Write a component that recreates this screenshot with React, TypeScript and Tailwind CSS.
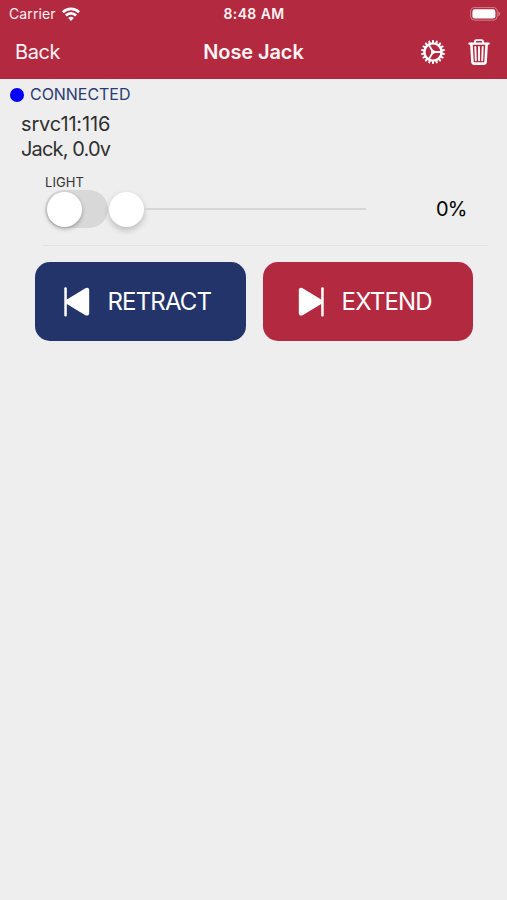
import React from "react";

function WifiIcon() {
  return (
    <svg width="18" height="14" viewBox="0 0 18 14" fill="none" stroke="#fff" strokeWidth="2.7">
      <path d="M0.9 5.2a11.5 11.5 0 0 1 16.2 0" />
      <path d="M3.9 8.5a7.2 7.2 0 0 1 10.2 0" />
      <path d="M9 14L6.2 11a4.1 4.1 0 0 1 5.6 0z" fill="#fff" stroke="none" />
    </svg>
  );
}

function BatteryIcon() {
  return (
    <svg width="31" height="14" viewBox="0 0 31 14">
      <rect x="0.6" y="0.6" width="26.6" height="12.6" rx="4" fill="none" stroke="#fff" strokeOpacity="0.4" strokeWidth="1" />
      <rect x="2.4" y="2.3" width="23" height="9.3" rx="2.4" fill="#fff" />
      <path d="M28.4 4.6c2 .8 2 3.8 0 4.6z" fill="#fff" fillOpacity="0.45" />
    </svg>
  );
}

const TEETH = Array.from({ length: 18 }, (_, i) => i * 20);

function GearIcon() {
  return (
    <svg width="24" height="24" viewBox="-12 -12 24 24" stroke="#fff" fill="none">
      <circle r="8.6" strokeWidth="2.4" />
      {TEETH.map((a) => (
        <path key={a} d="M0 -9V-11.1" strokeWidth="2" strokeLinecap="round" transform={`rotate(${a})`} />
      ))}
      <path d="M0 0H8.5M0 0L-4.25 -7.4M0 0L-4.25 7.4" strokeWidth="1.9" />
      <circle r="1.9" fill="#fff" stroke="none" />
    </svg>
  );
}

function TrashIcon() {
  return (
    <svg width="22" height="26" viewBox="0 0 22 26" fill="none" stroke="#fff" strokeLinecap="round" strokeLinejoin="round">
      <path d="M1.3 4.6H20.7" strokeWidth="2.1" />
      <path d="M7 4V2.6Q7 1.1 8.5 1.1H13.5Q15 1.1 15 2.6V4" strokeWidth="1.8" />
      <path d="M3.4 5L4.4 22.8Q4.6 24.6 6.4 24.6H15.6Q17.4 24.6 17.6 22.8L18.6 5" strokeWidth="2.6" />
      <path d="M7.3 8L7.8 21.2M11 8V21.2M14.7 8L14.2 21.2" strokeWidth="1.9" />
    </svg>
  );
}

function SkipIcon({ flip = false }: { flip?: boolean }) {
  return (
    <svg width="26" height="30" viewBox="0 0 26 30" className={flip ? "-scale-x-100" : ""} fill="#fff">
      <rect x="0.3" y="0.2" width="2.5" height="29.4" rx="1.1" />
      <path d="M2 12.9L21.8 1Q25.2 0 25.2 3.6V25.8Q25.2 29.4 21.8 28.4L2 16.5z" />
    </svg>
  );
}

export default function App() {
  return (
    <div className="flex h-[900px] w-[507px] flex-col bg-[#eeeeee] font-['Inter',sans-serif] whitespace-nowrap">
      <header className="h-[79px] bg-[#b32940] text-[#fff4f5]">
        <div className="grid h-[27px] grid-cols-3 items-center pr-[6px] pl-[9px]">
          <div className="flex items-center gap-[6px]">
            <span className="text-[14px] tracking-[0.1px]">Carrier</span>
            <WifiIcon />
          </div>
          <span className="-ml-[2px] text-center text-[14px] font-semibold tracking-[0.4px]">8:48 AM</span>
          <div className="flex justify-end">
            <BatteryIcon />
          </div>
        </div>
        <div className="grid h-[50px] grid-cols-3 items-center pr-[17px] pl-[15px]">
          <span className="text-[20px] tracking-[-0.4px]">Back</span>
          <span className="ml-[2px] text-center text-[20px] font-semibold tracking-[-0.1px]">Nose Jack</span>
          <div className="flex items-center justify-end gap-[23px]">
            <GearIcon />
            <TrashIcon />
          </div>
        </div>
      </header>

      <main>
        <div className="flex h-[31px] items-center pb-px pl-[9.5px]">
          <span className="mt-px size-[14px] rounded-full bg-[#0000fb]" />
          <span className="ml-[6.5px] text-[16px] tracking-[-0.05px] text-[#2b3b72]">CONNECTED</span>
        </div>
        <div className="pt-[2px] pl-[21px] text-[20px] leading-[25px] text-[#303030]">
          <p className="tracking-[-0.15px]">srvc11:116</p>
          <p className="tracking-[-0.85px]">Jack, 0.0v</p>
        </div>

        <section className="ml-[43px] h-[84px] w-[445px] border-b border-[#e2e2e2] pt-[11px] pl-[2px]">
          <h2 className="h-[17px] text-[13px] leading-[18px] tracking-[0.1px] text-[#333]">LIGHT</h2>
          <div className="flex h-[38px] items-center">
            <div className="flex h-[38px] w-[63px] items-center rounded-full bg-[#d8d8d8] pl-[2px]">
              <span className="size-[35px] rounded-full bg-white shadow-[0_2px_4px_rgba(0,0,0,0.28)]" />
            </div>
            <div className="ml-[1px] flex w-[257px] items-center">
              <span className="size-[35px] rounded-full bg-white shadow-[0_3px_6px_rgba(0,0,0,0.22)]" />
              <span className="h-[2px] flex-1 bg-[#d6d6d6]" />
            </div>
            <span className="ml-[70px] text-[20px] tracking-[-0.9px] text-black">0%</span>
          </div>
        </section>

        <div className="mt-4 ml-[35px] flex gap-[17px] text-[24px] text-white">
          <button className="flex h-[79px] w-[210.5px] items-center rounded-[15px] bg-[#23346a] pl-[29px]">
            <SkipIcon />
            <span className="ml-[17.5px] tracking-[-0.85px]">RETRACT</span>
          </button>
          <button className="flex h-[79px] w-[210.5px] items-center rounded-[15px] bg-[#b32940] pl-[35.5px]">
            <SkipIcon flip />
            <span className="ml-[17.5px] tracking-[-0.8px]">EXTEND</span>
          </button>
        </div>
      </main>
    </div>
  );
}
